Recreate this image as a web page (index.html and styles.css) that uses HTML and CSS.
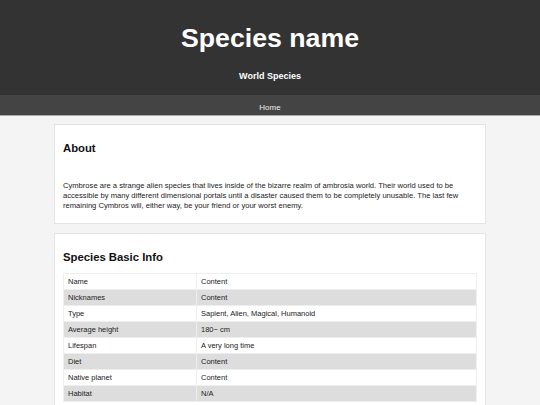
FILE: index.html
```html
<!DOCTYPE html>
<html>
	<head>
		<meta charset="utf-8" />
		<title>Species name</title>
		<link rel="stylesheet" href="styles.css">
	</head>
	<body>
		<div id="header">
			<h1 class="title">Species name</h1>
			<div class="subtitle">World Species</div>
		</div>
		<div id="nav">
			<a class="nav-links" href="#">Home</a>
		</div>
		<div class="cards">
			<h2 class="card-titles">About</h2>
			<p class="about-text">Cymbrose are a strange alien species that lives inside of the bizarre realm of ambrosia world. Their world used to be accessible by many different dimensional portals until a disaster caused them to be completely unusable. The last few remaining Cymbros will, either way, be your friend or your worst enemy.</p>
		</div>
		<div class="cards">
			<h2 class="card-titles">Species Basic Info</h2>
			<table class="info">
				<colgroup>
					<col class="info-key" />
					<col />
				</colgroup>
				<tr><td>Name</td><td>Content</td></tr>
				<tr><td>Nicknames</td><td>Content</td></tr>
				<tr><td>Type</td><td>Sapient, Alien, Magical, Humanoid</td></tr>
				<tr><td>Average height</td><td>180~ cm</td></tr>
				<tr><td>Lifespan</td><td>A very long time</td></tr>
				<tr><td>Diet</td><td>Content</td></tr>
				<tr><td>Native planet</td><td>Content</td></tr>
				<tr><td>Habitat</td><td>N/A</td></tr>
			</table>
		</div>
	</body>
</html>
```

FILE: styles.css
```css
body {
	margin: 0px;
	font-family: "Liberation Sans", Arial, sans-serif;
	background-color: #f4f4f4;
	color: #222;
}

#header {
	background-color: #333;
	color: white;
	text-align: center;
	padding: 23px 0px 14px 0px;
}

.title {
	margin: 0px 0px 17px 0px;
	font-size: 26.7px;
	line-height: 31px;
}

.subtitle {
	font-size: 9px;
	line-height: 10px;
	font-weight: bold;
}

#nav {
	background-color: #444;
	border-bottom: 1px solid #aaa;
	text-align: center;
	height: 20px;
	line-height: 20px;
}

.nav-links {
	color: #eee;
	font-size: 8px;
	text-decoration: none;
}

.cards {
	box-sizing: border-box;
	width: 80%;
	margin: 8px auto 9px auto;
	padding: 8px;
	background-color: white;
	border: 1px solid #e4e4e4;
}

.card-titles {
	margin: 9px 0px 9px 0px;
	font-size: 11.3px;
	line-height: 13px;
	color: #111;
}

.about-text {
	margin: 26px 0px 4px 0px;
	font-size: 7.6px;
	line-height: 10px;
}

.info {
	width: 100%;
	border-collapse: collapse;
	table-layout: fixed;
	border: 1px solid #eee;
	font-size: 7.5px;
	margin-bottom: 8px;
}

.info-key {
	width: 133px;
}

.info td {
	padding: 3px 4px;
	line-height: 9px;
	border: 1px solid #eee;
}

.info tr:nth-child(even) {
	background-color: #ddd;
}
```
